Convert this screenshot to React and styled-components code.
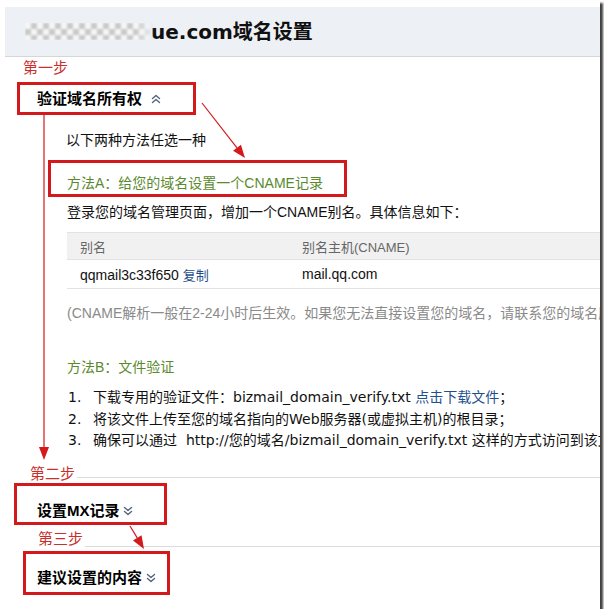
import React from 'react';
import styled, { createGlobalStyle } from 'styled-components';

const GlobalStyle = createGlobalStyle`
  html, body {
    margin: 0;
    padding: 0;
    background: #fff;
  }
  body {
    font-family: "Liberation Sans", "Noto Sans CJK SC", sans-serif;
    font-size: 14px;
    color: #111;
  }
`;

const RED = '#d3191b';

const Frame = styled.div`
  position: relative;
  width: 600px;
  height: 609px;
  background: #fff;
  overflow: hidden;
  box-shadow: 3px 3px 2px rgba(0, 0, 0, 0.75);
`;

const Header = styled.div`
  margin: 7px 0 0 5px;
  height: 50px;
  box-sizing: border-box;
  background: #edf1f6;
  border-bottom: 1px solid #d6d6d6;
  display: flex;
  align-items: center;
  padding-left: 20px;
`;

const Masked = styled.span`
  display: inline-block;
  width: 130px;
  height: 17px;
  margin-right: -4px;
  position: relative;
  z-index: 1;
  background-color: #f6f6f6;
  background-image: repeating-conic-gradient(#c9c9c9 0 25%, #f6f6f6 0 50%);
  background-size: 12px 12px;
  filter: blur(0.8px);
  -webkit-mask-image: linear-gradient(to right, #000 85%, transparent);
  mask-image: linear-gradient(to right, #000 85%, transparent);
`;

const Title = styled.h1`
  margin: 0;
  font-family: "DejaVu Sans", "Noto Sans CJK SC", sans-serif;
  font-size: 20px;
  font-weight: bold;
  color: #111;
  line-height: 24px;
`;

const StepRow = styled.div`
  display: flex;
  align-items: flex-start;
  margin-top: ${(p) => p.$top}px;
  padding-left: ${(p) => p.$indent}px;
`;

const StepLabel = styled.span`
  font-family: "Noto Sans CJK SC", sans-serif;
  font-size: 15px;
  line-height: 18px;
  color: #c9302c;
  white-space: nowrap;
`;

const Rule = styled.div`
  flex: 1;
  height: 1px;
  margin-left: 2px;
  margin-top: ${(p) => p.$offset}px;
  background: #dcdcdc;
`;

const MarkBox = styled.div`
  box-sizing: border-box;
  display: flex;
  align-items: ${(p) => (p.$low ? 'flex-end' : 'center')};
  margin-top: ${(p) => p.$top}px;
  margin-left: ${(p) => p.$left}px;
  width: ${(p) => p.$width}px;
  height: ${(p) => p.$height}px;
  padding-left: ${(p) => p.$pad}px;
  padding-bottom: ${(p) => p.$bottom || 0}px;
  border: 3px solid ${RED};
`;

const SectionTitle = styled.span`
  display: flex;
  align-items: center;
  font-family: "Liberation Sans", "Noto Sans CJK SC", sans-serif;
  font-size: 15px;
  font-weight: bold;
  line-height: 20px;
  color: #000;
  white-space: nowrap;
`;

const TitleText = styled.span`
  letter-spacing: ${(p) => p.$spacing || 0}px;
  margin-right: ${(p) => p.$gap}px;
`;

const Body = styled.div`
  padding-left: 67px;
`;

const Line = styled.p`
  margin: ${(p) => p.$top}px 0 0;
  padding-left: ${(p) => p.$indent || 0}px;
  line-height: 20px;
  white-space: nowrap;
  color: ${(p) => p.$color || '#111'};
`;

const MethodTitle = styled.span`
  font-size: 14px;
  line-height: 20px;
  color: #5a8a2e;
  white-space: nowrap;
`;

const Table = styled.div`
  margin-top: 10px;
  width: 533px;
`;

const TableRow = styled.div`
  display: grid;
  grid-template-columns: 235px 1fr;
  align-items: center;
  height: ${(p) => (p.$head ? 28 : 29)}px;
  box-sizing: border-box;
  background: ${(p) => (p.$head ? '#f1f1f1' : '#fff')};
  border-top: ${(p) => (p.$head ? '1px solid #e2e2e2' : 'none')};
  border-bottom: 1px solid #e2e2e2;
  color: ${(p) => (p.$head ? '#666' : '#111')};
  font-size: ${(p) => (p.$head ? 13 : 14)}px;
  white-space: nowrap;

  & > span {
    padding-left: 13px;
  }
  & > span + span {
    padding-left: 0;
  }
`;

const Link = styled.a`
  color: #1f4f8e;
  text-decoration: none;
  font-size: ${(p) => p.$size || 13}px;
  margin-left: ${(p) => p.$gap || 0}px;
`;

const StepList = styled.ol`
  margin: 10px 0 0;
  padding: 0;
  list-style: none;
  font-family: "DejaVu Sans", "Noto Sans CJK SC", sans-serif;
  font-size: 14px;
`;

const StepItem = styled.li`
  display: flex;
  line-height: 21.5px;
  white-space: nowrap;
  color: #111;

  & > b {
    font-weight: normal;
    width: 25px;
    padding-left: 1px;
    flex: none;
  }
`;

const Overlay = styled.svg`
  position: absolute;
  left: 0;
  top: 0;
  pointer-events: none;
`;

const Chevrons = ({ up }) => (
  <svg width="10" height="10" viewBox="0 0 10 10">
    <g fill="none" stroke="#52647c" strokeWidth="1.4" strokeLinecap="round" strokeLinejoin="round">
      {up ? (
        <>
          <polyline points="1.5,4.5 5,1.5 8.5,4.5" />
          <polyline points="1.5,8.5 5,5.5 8.5,8.5" />
        </>
      ) : (
        <>
          <polyline points="1.5,1.5 5,4.5 8.5,1.5" />
          <polyline points="1.5,5.5 5,8.5 8.5,5.5" />
        </>
      )}
    </g>
  </svg>
);

const Arrow = ({ x1, y1, x2, y2 }) => {
  const a = Math.atan2(y2 - y1, x2 - x1);
  const len = 13;
  const w = 5;
  const bx = x2 - len * Math.cos(a);
  const by = y2 - len * Math.sin(a);
  const px = -Math.sin(a) * w;
  const py = Math.cos(a) * w;
  return (
    <g>
      <line x1={x1} y1={y1} x2={bx} y2={by} stroke={RED} strokeWidth="1.2" />
      <polygon points={`${x2},${y2} ${bx + px},${by + py} ${bx - px},${by - py}`} fill={RED} />
    </g>
  );
};

const App = () => (
  <Frame>
    <GlobalStyle />
    <Header>
      <Masked />
      <Title>ue.com域名设置</Title>
    </Header>

    <StepRow $top={1} $indent={23}>
      <StepLabel>第一步</StepLabel>
    </StepRow>
    <MarkBox $top={6} $left={17} $width={179} $height={33} $pad={17}>
      <SectionTitle>
        <TitleText $gap={9}>验证域名所有权</TitleText>
        <Chevrons up />
      </SectionTitle>
    </MarkBox>

    <Line $top={15} $indent={66}>以下两种方法任选一种</Line>

    <MarkBox $top={10} $left={48} $width={299} $height={37} $pad={16} $bottom={1} $low>
      <MethodTitle>方法A：给您的域名设置一个CNAME记录</MethodTitle>
    </MarkBox>

    <Body>
      <Line $top={5}>登录您的域名管理页面，增加一个CNAME别名。具体信息如下：</Line>
      <Table>
        <TableRow $head>
          <span>别名</span>
          <span>别名主机(CNAME)</span>
        </TableRow>
        <TableRow>
          <span>
            qqmail3c33f650<Link href="#" $gap={4}>复制</Link>
          </span>
          <span>mail.qq.com</span>
        </TableRow>
      </Table>
      <Line $top={14} $color="#8a8a8a">
        (CNAME解析一般在2-24小时后生效。如果您无法直接设置您的域名，请联系您的域名服务商。)
      </Line>
      <Line $top={34}>
        <MethodTitle>方法B：文件验证</MethodTitle>
      </Line>
      <StepList>
        <StepItem>
          <b>1.</b>
          <span>
            下载专用的验证文件：bizmail_domain_verify.txt <Link href="#" $size={14}>点击下载文件</Link>；
          </span>
        </StepItem>
        <StepItem>
          <b>2.</b>
          <span>将该文件上传至您的域名指向的Web服务器(或虚拟主机)的根目录；</span>
        </StepItem>
        <StepItem>
          <b>3.</b>
          <span>确保可以通过&nbsp; http://您的域名/bizmail_domain_verify.txt 这样的方式访问到该文件。</span>
        </StepItem>
      </StepList>
    </Body>

    <StepRow $top={12} $indent={30}>
      <StepLabel>第二步</StepLabel>
      <Rule $offset={13} />
    </StepRow>
    <MarkBox $top={1} $left={14} $width={153} $height={42} $pad={20} $bottom={1} $low>
      <SectionTitle>
        <TitleText $gap={3}>设置MX记录</TitleText>
        <Chevrons />
      </SectionTitle>
    </MarkBox>

    <StepRow $top={4} $indent={38}>
      <StepLabel>第三步</StepLabel>
      <Rule $offset={17} />
    </StepRow>
    <MarkBox $top={4} $left={23} $width={147} $height={44} $pad={11} $bottom={4} $low>
      <SectionTitle>
        <TitleText $gap={4}>建议设置的内容</TitleText>
        <Chevrons />
      </SectionTitle>
    </MarkBox>

    <Overlay width="600" height="609">
      <Arrow x1={44} y1={115} x2={44} y2={460} />
      <Arrow x1={202} y1={103} x2={245} y2={158} />
      <Arrow x1={130} y1={526} x2={144} y2={549} />
    </Overlay>
  </Frame>
);

export default App;
